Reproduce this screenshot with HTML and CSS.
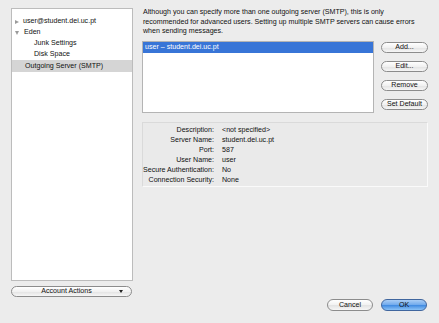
FILE: index.html
```html
<!doctype html>
<html lang="en">
<head>
    <meta charset="UTF-8">
    <title>Outgoing Server (SMTP)</title>
    <link rel="stylesheet" href="styles.css">
</head>
<body>
    <div class="window">
        <div class="top">
            <div class="sidebar">
                <div class="tree">
                    <div class="tree-row"><span class="twisty closed"></span>user@student.dei.uc.pt</div>
                    <div class="tree-row"><span class="twisty open"></span>Eden</div>
                    <div class="tree-row child">Junk Settings</div>
                    <div class="tree-row child">Disk Space</div>
                    <div class="tree-row sub selected">Outgoing Server (SMTP)</div>
                </div>
                <button class="btn actions">Account Actions<span class="arrow"></span></button>
            </div>

            <div class="main">
                <p class="intro">Although you can specify more than one outgoing server (SMTP), this is only recommended for advanced users. Setting up multiple SMTP servers can cause errors when sending messages.</p>

                <div class="servers">
                    <div class="server-list">
                        <div class="server-row selected">user &ndash; student.dei.uc.pt</div>
                    </div>
                    <div class="server-buttons">
                        <button class="btn">Add...</button>
                        <button class="btn">Edit...</button>
                        <button class="btn">Remove</button>
                        <button class="btn">Set Default</button>
                    </div>
                </div>

                <div class="details">
                    <div class="detail"><span class="label">Description:</span><span class="value">&lt;not specified&gt;</span></div>
                    <div class="detail"><span class="label">Server Name:</span><span class="value">student.dei.uc.pt</span></div>
                    <div class="detail"><span class="label">Port:</span><span class="value">587</span></div>
                    <div class="detail"><span class="label">User Name:</span><span class="value">user</span></div>
                    <div class="detail"><span class="label">Secure Authentication:</span><span class="value">No</span></div>
                    <div class="detail"><span class="label">Connection Security:</span><span class="value">None</span></div>
                </div>
            </div>
        </div>

        <div class="footer">
            <button class="btn cancel">Cancel</button>
            <button class="btn ok">OK</button>
        </div>
    </div>
</body>
</html>
```

FILE: styles.css
```css
body {
    margin: 0;
    background-color: #ececec;
    font-family: 'Liberation Sans', Arial, sans-serif;
    font-size: 7.1px;
    color: #111;
}
.window {
    width: 439px;
    height: 323px;
    display: flex;
    flex-direction: column;
    overflow: hidden;
}
.top {
    display: flex;
}
.sidebar {
    width: 122px;
    margin: 8px 0 0 11px;
    display: flex;
    flex-direction: column;
}
.tree {
    height: 264px;
    background-color: white;
    border: 1px solid #bcbcbc;
    padding-top: 7px;
}
.tree-row {
    height: 11px;
    line-height: 11px;
    padding-left: 3px;
    display: flex;
    align-items: center;
    white-space: nowrap;
}
.tree-row.child {
    padding-left: 22px;
}
.tree-row.sub {
    padding-left: 13px;
    height: 12px;
}
.tree-row.selected {
    background-color: #d5d5d5;
}
.twisty {
    width: 0;
    height: 0;
    margin-right: 5px;
}
.twisty.closed {
    border-top: 2.5px solid transparent;
    border-bottom: 2.5px solid transparent;
    border-left: 4px solid #9a9a9a;
    margin-right: 4px;
}
.twisty.open {
    border-left: 2.5px solid transparent;
    border-right: 2.5px solid transparent;
    border-top: 4px solid #9a9a9a;
}
.btn {
    font-family: inherit;
    font-size: 7.1px;
    color: #111;
    height: 11px;
    padding: 0;
    border: 1px solid #8c8c8c;
    border-radius: 6px;
    background: linear-gradient(#ffffff, #f1f1f1 50%, #e2e2e2 51%, #f6f6f6);
    line-height: 9px;
}
.actions {
    margin-top: 5px;
    width: 121px;
    padding-right: 10px;
    position: relative;
}
.arrow {
    position: absolute;
    right: 8px;
    top: 3px;
    border-left: 2.5px solid transparent;
    border-right: 2.5px solid transparent;
    border-top: 3.5px solid #222;
}
.main {
    margin-left: 9px;
    width: 286px;
    padding-top: 8px;
}
.intro {
    margin: 0;
    line-height: 9.5px;
    padding-left: 1px;
}
.servers {
    display: flex;
    margin-top: 4px;
}
.server-list {
    width: 231px;
    height: 70px;
    background-color: white;
    border: 1px solid #b4b4b4;
}
.server-row {
    height: 11px;
    line-height: 11px;
    padding-left: 2px;
}
.server-row.selected {
    background-color: #3875d7;
    color: white;
}
.server-buttons {
    margin-left: 7px;
    padding-top: 1px;
    display: flex;
    flex-direction: column;
    gap: 8px;
}
.server-buttons .btn {
    width: 47px;
}
.details {
    margin-top: 9px;
    height: 61px;
    border: 1px solid #dadada;
    border-right-color: #fafafa;
    border-bottom-color: #fafafa;
    background-color: #eaeaea;
    padding-top: 2px;
}
.detail {
    display: flex;
    height: 10px;
    line-height: 10px;
}
.label {
    width: 71px;
    flex-shrink: 0;
    display: flex;
    justify-content: flex-end;
    white-space: nowrap;
}
.value {
    margin-left: 8px;
    white-space: nowrap;
}
.footer {
    margin-top: auto;
    margin-bottom: 12px;
    display: flex;
    justify-content: flex-end;
    gap: 8px;
    padding-right: 12px;
}
.footer .btn {
    width: 46px;
    height: 12px;
}
.ok {
    border-color: #40669e;
    background: linear-gradient(#a9cdf5, #6fa9ec 50%, #3d88e0 51%, #8cc3f6);
}
```
